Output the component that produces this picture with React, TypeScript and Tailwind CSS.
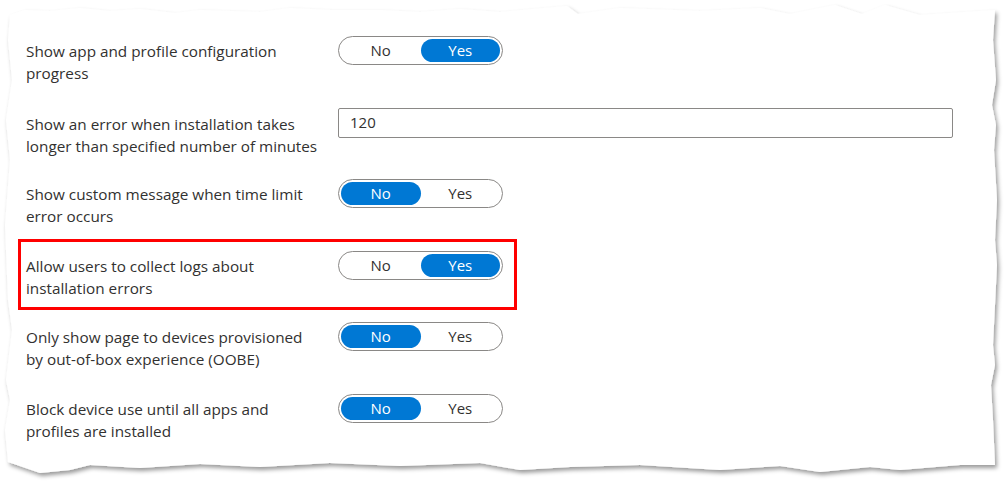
import React from 'react';

type Row =
  | { label: string[]; kind: 'toggle'; value: 'No' | 'Yes'; highlight?: boolean }
  | { label: string[]; kind: 'input'; value: string };

const rows: Row[] = [
  { label: ['Show app and profile configuration', 'progress'], kind: 'toggle', value: 'Yes' },
  { label: ['Show an error when installation takes', 'longer than specified number of minutes'], kind: 'input', value: '120' },
  { label: ['Show custom message when time limit', 'error occurs'], kind: 'toggle', value: 'No' },
  { label: ['Allow users to collect logs about', 'installation errors'], kind: 'toggle', value: 'Yes', highlight: true },
  { label: ['Only show page to devices provisioned', 'by out-of-box experience (OOBE)'], kind: 'toggle', value: 'No' },
  { label: ['Block device use until all apps and', 'profiles are installed'], kind: 'toggle', value: 'No' },
];

// torn paper outline
const torn =
  '10,15 25,10 50,11 80,8 110,11 140,9 175,13 200,10 260,12 290,8 330,10 380,10 420,12 460,9 500,12 533,9 567,6 578,14 620,8 700,11 760,8 790,14 835,5 862,14 885,5 920,15 995,10 ' +
  '993,40 996,80 992,105 996,125 994,150 997,200 995,240 997,265 993,345 995,365 991,385 993,420 995,465 ' +
  '960,465 900,470 870,467 820,472 780,466 720,470 640,465 570,467 520,470 480,463 400,466 330,463 260,467 200,464 140,468 90,465 70,470 40,473 8,462 ' +
  '5,430 10,400 6,380 12,330 8,300 5,225 10,160 6,120 12,80 8,40';

const Toggle: React.FC<{ value: 'No' | 'Yes' }> = ({ value }) => (
  <div className="flex h-[29px] w-[165px] items-center rounded-full border border-[#8a8886] bg-white p-[2px] text-[15px]">
    {(['No', 'Yes'] as const).map((opt) => (
      <div
        key={opt}
        className={
          opt === value
            ? 'flex h-[23px] flex-1 items-center justify-center rounded-full bg-[#0078d4] text-white'
            : 'flex h-[23px] flex-1 items-center justify-center text-[#323130]'
        }
      >
        {opt}
      </div>
    ))}
  </div>
);

const App: React.FC = () => {
  return (
    <div className="relative h-[485px] w-[1008px] overflow-hidden bg-white font-['Open_Sans',sans-serif] text-[15.3px] text-[#323130]">
      <svg className="absolute inset-0" width="1008" height="485" viewBox="0 0 1008 485">
        <defs>
          <filter id="shadow" x="-5%" y="-5%" width="110%" height="115%">
            <feDropShadow dx="2" dy="3" stdDeviation="2" floodColor="#000" floodOpacity="0.4" />
          </filter>
        </defs>
        <polygon points={torn} fill="#fff" filter="url(#shadow)" />
      </svg>

      <div className="relative flex flex-col gap-y-[23.5px] pl-[26px] pt-[36px]">
        {rows.map((row, i) => (
          <div key={i} className="relative grid h-[48px] grid-cols-[312px_615px] items-start">
            {row.kind === 'toggle' && row.highlight && (
              <div className="pointer-events-none absolute left-[-8px] top-[-12px] h-[71px] w-[499px] border-[3px] border-[#ff0000]" />
            )}
            <div className={row.kind === 'input' ? 'pt-[5px] leading-[22px]' : 'pt-[4px] leading-[22px]'}>
              {row.label.map((l) => (
                <div key={l} className="whitespace-nowrap">{l}</div>
              ))}
            </div>
            {row.kind === 'toggle' ? (
              <Toggle value={row.value} />
            ) : (
              <div className="flex h-[30px] items-center rounded-[2px] border border-[#8a8886] px-[11px] text-[15px]">{row.value}</div>
            )}
          </div>
        ))}
      </div>
    </div>
  );
};

export default App;
